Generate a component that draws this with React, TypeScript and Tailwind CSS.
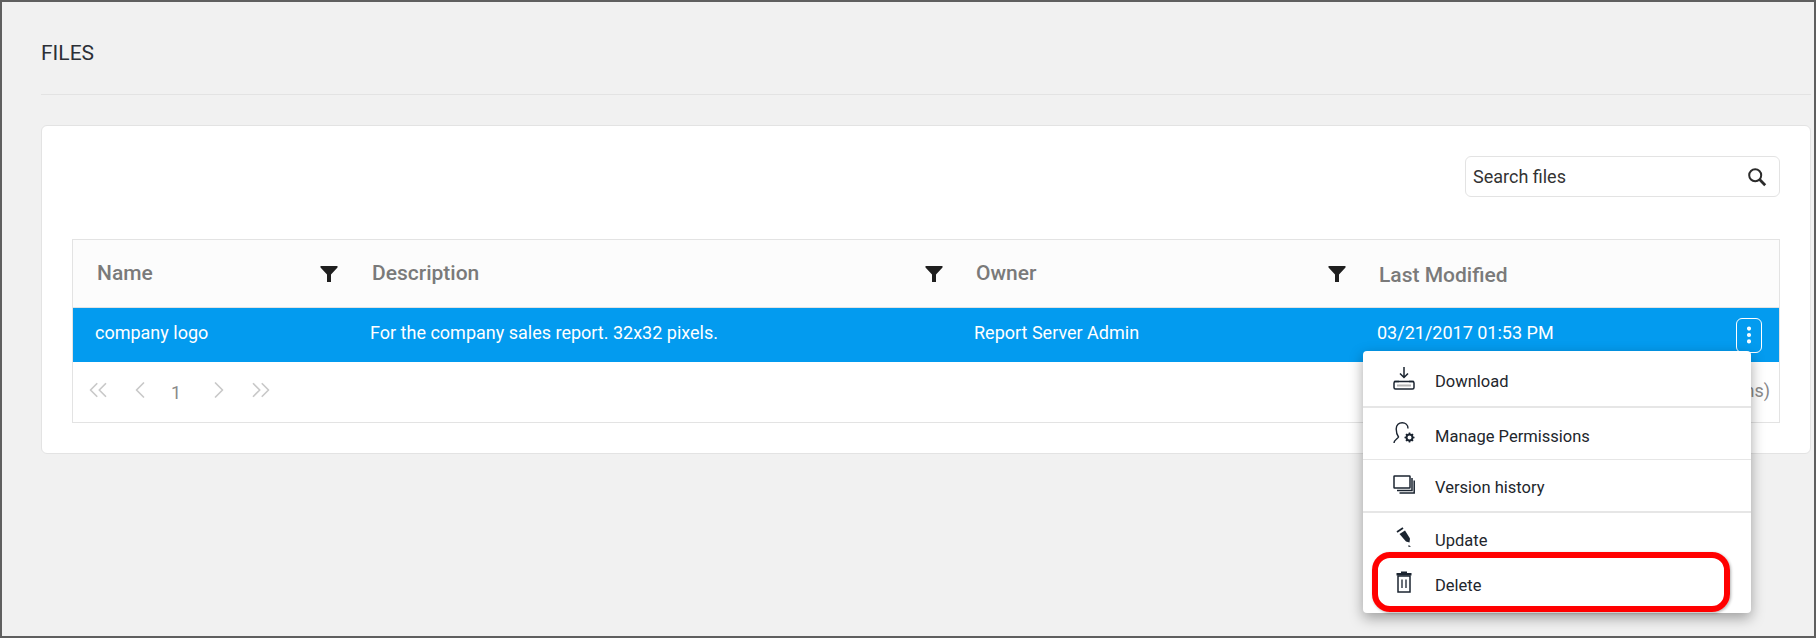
import { ChevronLeft, ChevronRight, ChevronsLeft, ChevronsRight, EllipsisVertical } from "lucide-react";

function FilterIcon() {
  return (
    <svg width="18" height="18" viewBox="0 0 18 18" className="shrink-0">
      <path d="M0.5 1h17v1.5L11 9.5V17H7V9.5L0.5 2.5z" fill="#1f1f1f" />
    </svg>
  );
}

function SearchIcon() {
  return (
    <svg width="20" height="20" viewBox="0 0 20 20" fill="none" stroke="#2b2b2b">
      <circle cx="8.2" cy="8.2" r="6" strokeWidth="2" />
      <path d="M12.6 12.6L18.2 18.2" strokeWidth="2.8" />
    </svg>
  );
}

function HeaderCell({ title, filter = true, className = "pr-[9px]" }: { title: string; filter?: boolean; className?: string }) {
  return (
    <div className={`flex items-center justify-between pl-6 ${className}`}>
      <span className={filter ? "text-[21px] font-medium text-[#7a7a7a]" : "pt-[5px] text-[21px] font-medium text-[#7a7a7a]"}>{title}</span>
      {filter && <FilterIcon />}
    </div>
  );
}

function DownloadIcon() {
  return (
    <svg width="22" height="23" viewBox="0 0 22 23" fill="none" stroke="#1b2430" strokeWidth="1.5">
      <path d="M11 0v10M7 6.5l4 4 4-4" />
      <path d="M1 14.5h5M16 14.5h5" />
      <rect x="1" y="14.5" width="20" height="7.5" rx="1.5" />
      <path d="M4 18.5h14" stroke="#b5b5b5" strokeWidth="2" />
    </svg>
  );
}

function PermissionsIcon() {
  return (
    <svg width="22" height="22" viewBox="0 0 22 22" fill="none" stroke="#1b2430" strokeWidth="1.4">
      <path d="M1 21c0-3 3.5-4 4.5-6C3.800 12.500 3.200 9.500 3.200 7c0-4 2.800-6.300 6-6.300 3.200 0 5.800 2.300 5.800 5.800" />
      <circle cx="16.500" cy="15.500" r="3" strokeWidth="2" />
      <path d="M16.500 10.500v2M16.500 18.500v2M11.500 15.500h2M19.500 15.500h2M13 12l1.500 1.500M18.500 17.500l1.500 1.500M13 19l1.500-1.500M18.500 13.500l1.500-1.500" strokeWidth="1.6" />
    </svg>
  );
}

function VersionIcon() {
  return (
    <svg width="22" height="19" viewBox="0 0 22 19" fill="none" stroke="#1b2430" strokeWidth="1.5">
      <rect x="1" y="1" width="16" height="12" rx="0.5" />
      <path d="M19 3v12.500H4" />
      <path d="M21.200 5.500v12.500H6.500" />
    </svg>
  );
}

function UpdateIcon() {
  return (
    <svg width="16" height="21" viewBox="0 0 16 21" fill="none">
      <path d="M1 5L7 1" stroke="#1b2430" strokeWidth="1.800" />
      <path d="M3.500 7L9 3.500 14 11.500 13.500 15.500 10 14.500z" fill="#1b2430" />
      <path d="M12.500 18l2.500 1.500-2.500 0.500z" fill="#1b2430" />
    </svg>
  );
}

function TrashIcon() {
  return (
    <svg width="16" height="22" viewBox="0 0 16 22" fill="none">
      <path d="M5 0.500h6V2h4.500v2.500H0.500V2H5z" fill="#1b2430" />
      <rect x="2" y="5" width="12" height="16" stroke="#1b2430" strokeWidth="1.500" />
      <path d="M6 8.500v8.500M10 8.500v8.500" stroke="#1b2430" strokeWidth="1.300" />
    </svg>
  );
}

const menuItems = [
  { label: "Download", icon: <DownloadIcon />, cls: "h-[57px] border-b-2", iconCls: "pl-[30px]", textCls: "pt-[8px]" },
  { label: "Manage Permissions", icon: <PermissionsIcon />, cls: "h-[52px] border-b", iconCls: "pb-[2px] pl-[30px]", textCls: "pt-[7px]" },
  { label: "Version history", icon: <VersionIcon />, cls: "h-[53px] border-b-2", iconCls: "pb-[3px] pl-[30px]", textCls: "pt-[6px]" },
  { label: "Update", icon: <UpdateIcon />, cls: "h-[48px]", iconCls: "pl-[33px]", textCls: "pt-[8px]" },
  { label: "Delete", icon: <TrashIcon />, cls: "h-[52px]", iconCls: "pb-[11px] pl-[33px]", textCls: "pb-[2px]" },
];

export default function App() {
  return (
    <div
      className="relative h-[638px] w-[1816px] overflow-hidden border-2 border-[#5f5f5f] bg-[#f1f1f1] pl-[39px] pr-[3px] text-[#2b2b2b]"
      style={{ fontFamily: "Roboto, sans-serif" }}
    >
      <div className="flex h-[93px] items-center border-b border-[#e3e3e3] pt-[12px] text-[21px] text-[#2b2f36]">FILES</div>

      <div className="mt-[30px] rounded-md border border-[#e3e3e3] bg-white p-[30px]">
        <div className="flex justify-end">
          <div className="flex h-[41px] w-[315px] items-center justify-between rounded-md border border-[#e3e3e3] pl-[7px] pr-[12px]">
            <span className="text-[18px] text-[#333]">Search files</span>
            <SearchIcon />
          </div>
        </div>

        <div className="mt-[42px] border border-[#e3e3e3]">
          <div className="grid h-[68px] grid-cols-[275px_604px_403px_1fr] border-b border-[#e3e3e3] bg-[#fcfcfc]">
            <HeaderCell title="Name" className="pr-[10px]" />
            <HeaderCell title="Description" />
            <HeaderCell title="Owner" />
            <HeaderCell title="Last Modified" filter={false} />
          </div>

          <div className="grid h-[54px] grid-cols-[275px_604px_403px_1fr] items-center bg-[#039bef] text-[18px] text-white">
            <div className="pb-[5px] pl-[22px]">company logo</div>
            <div className="pb-[5px] pl-[22px]">For the company sales report. 32x32 pixels.</div>
            <div className="pb-[5px] pl-[22px]">Report Server Admin</div>
            <div className="flex items-center justify-between pl-[22px] pr-[17px]">
              <span className="pb-[5px]">03/21/2017 01:53 PM</span>
              <div className="flex h-[35px] w-[26px] items-center justify-center rounded-md border border-white">
                <EllipsisVertical size={22} strokeWidth={2.5} />
              </div>
            </div>
          </div>

          <div className="flex h-[60px] items-center justify-between pb-[4px] pl-[10px] pr-[9px] text-[#c9c9c9]">
            <div className="flex items-center">
              <ChevronsLeft size={30} strokeWidth={1.4} />
              <ChevronLeft size={28} strokeWidth={1.5} className="ml-[13px]" />
              <span className="ml-[15px] mt-[4px] w-[14px] text-center text-[18px] text-[#8a8a8a]">1</span>
              <ChevronRight size={28} strokeWidth={1.5} className="ml-[22px]" />
              <ChevronsRight size={30} strokeWidth={1.4} className="ml-[13px]" />
            </div>
            <span className="text-[18px] text-[#8a8a8a]">1 - 1 of 1 (1 versions)</span>
          </div>
        </div>
      </div>

      <div className="absolute left-[1361px] top-[349px] w-[388px] rounded-sm bg-white shadow-[0_5px_14px_rgba(0,0,0,0.35)]">
        {menuItems.map((item) => (
          <div key={item.label} className={`flex items-center border-[#e6e6e6] text-[16.5px] text-[#22262c] ${item.cls}`}>
            <div className={`flex w-[72px] shrink-0 ${item.iconCls}`}>{item.icon}</div>
            <span className={item.textCls}>{item.label}</span>
          </div>
        ))}
        <div className="absolute left-[9px] top-[201px] h-[60px] w-[358px] rounded-[18px] border-[6px] border-[#ff0000] shadow-[1px_1px_3px_rgba(0,0,0,0.3)]" />
      </div>
    </div>
  );
}
